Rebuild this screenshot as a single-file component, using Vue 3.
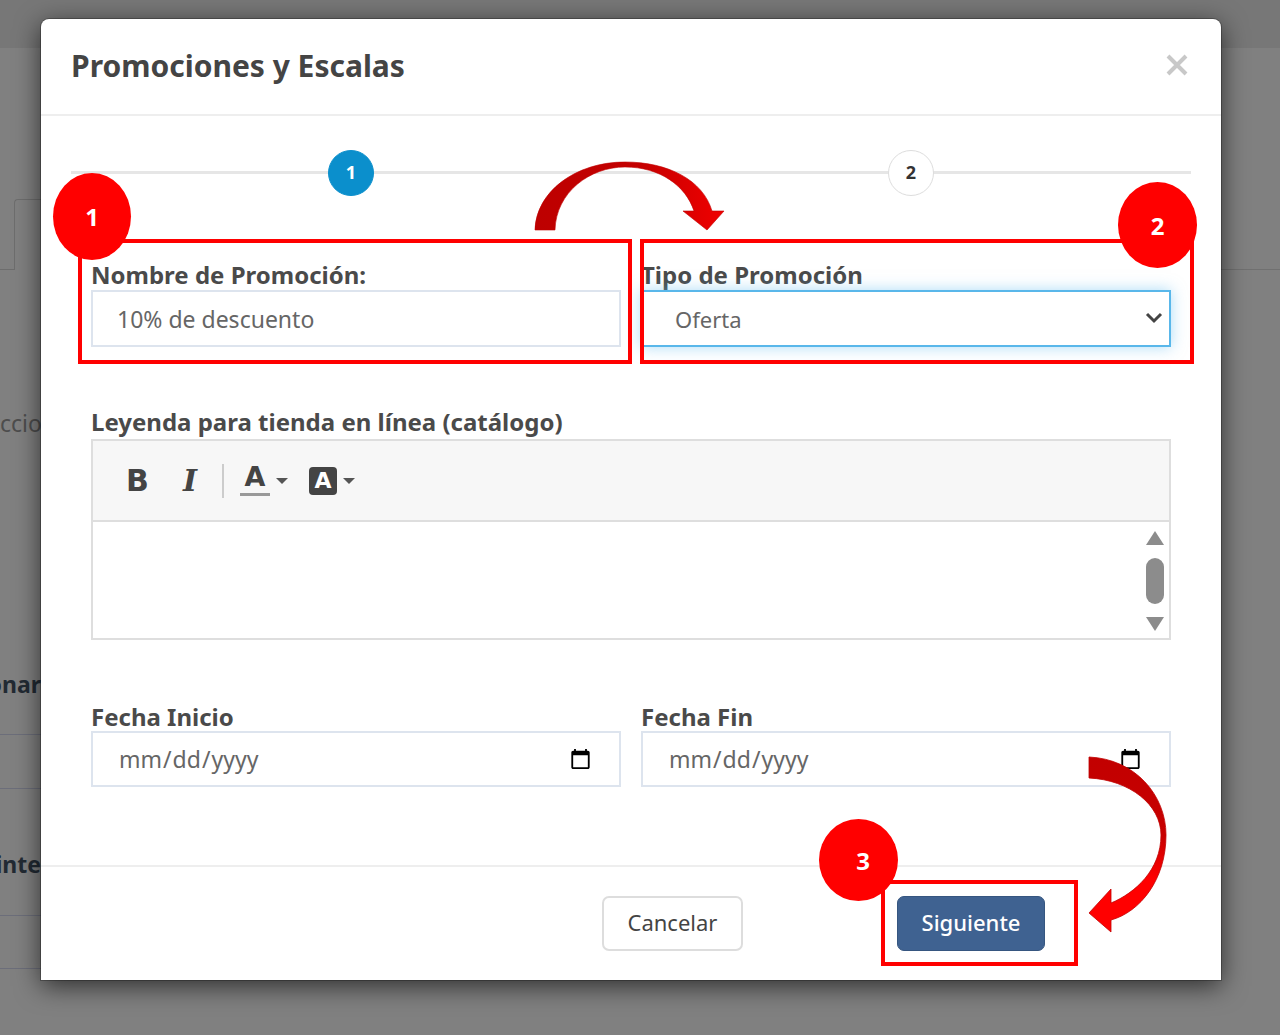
<script setup>
const scrollParts = ['up', 'thumb', 'down']
</script>

<template>
  <div class="page">
    <div class="top-band"></div>
    <div class="bg-tab"></div>
    <div class="bg-rule tab-base"></div>
    <div class="bg-rule bg-right"></div>
    <span class="bg-text t1">ccio</span>
    <span class="bg-text t2">onar</span>
    <span class="bg-text t3">inte</span>
    <div class="bg-rule l1"></div>
    <div class="bg-rule l2"></div>
    <div class="bg-rule l3"></div>
    <div class="bg-rule l4"></div>

    <section class="modal">
      <header class="modal-head">
        <h2>Promociones y Escalas</h2>
        <svg class="close" viewBox="0 0 22 22" width="22" height="22"><path d="M2 2 L20 20 M20 2 L2 20" /></svg>
      </header>

      <div class="modal-body">
        <div class="stepper">
          <span class="step active">1</span>
          <span class="step">2</span>
        </div>

        <div class="fields">
          <div class="form">
            <label class="first">Nombre de Promoción:</label>
            <input class="ctl" type="text" value="10% de descuento" />
          </div>
          <div class="form">
            <label class="first">Tipo de Promoción</label>
            <div class="select-wrap">
              <select class="ctl focused"><option>Oferta</option></select>
              <svg class="chev" viewBox="0 0 18 12" width="18" height="12"><path d="M2 2 L9 9 L16 2" /></svg>
            </div>
          </div>
        </div>

        <label class="legend">Leyenda para tienda en línea (catálogo)</label>
        <div class="editor">
          <div class="toolbar">
            <span class="tool-b">B</span>
            <span class="tool-i">I</span>
            <span class="tool-sep"></span>
            <span class="tool-a">A</span>
            <span class="caret"></span>
            <span class="tool-box">A</span>
            <span class="caret"></span>
          </div>
          <div class="editor-area">
            <div class="scroll">
              <span v-for="p in scrollParts" :key="p" :class="p"></span>
            </div>
          </div>
        </div>

        <div class="fields dates">
          <div class="form">
            <label>Fecha Inicio</label>
            <input class="ctl date" type="date" />
          </div>
          <div class="form">
            <label>Fecha Fin</label>
            <input class="ctl date" type="date" />
          </div>
        </div>
      </div>

      <footer class="modal-foot">
        <button class="btn cancel">Cancelar</button>
        <button class="btn next">Siguiente</button>
      </footer>
    </section>

    <!-- annotations drawn over the screenshot -->
    <div class="mark m1"></div>
    <div class="mark m2"></div>
    <div class="mark m3"></div>
    <span class="badge b1">1</span>
    <span class="badge b2">2</span>
    <span class="badge b3">3</span>
    <svg class="arrows" viewBox="0 0 1280 1035" width="1280" height="1035">
      <defs>
        <linearGradient id="g1" x1="0" y1="0" x2="1" y2="0">
          <stop offset="0" stop-color="#bd0000" />
          <stop offset="0.55" stop-color="#c40000" />
          <stop offset="1" stop-color="#f00000" />
        </linearGradient>
        <linearGradient id="g2" x1="0" y1="0" x2="0" y2="1">
          <stop offset="0" stop-color="#c20000" />
          <stop offset="0.45" stop-color="#c80000" />
          <stop offset="0.7" stop-color="#ff0000" />
          <stop offset="1" stop-color="#ff0000" />
        </linearGradient>
      </defs>
      <path fill="url(#g1)" stroke="#c00000" stroke-width="0.6"
        d="M535 230 C536 192 575 162 625 162 C668 162 703 180 712 211 L724 211 L707 230 L683 211 L694 211 C686 186 660 167 625 167 C590 167 556 192 555 230 Z" />
      <path fill="url(#g2)" stroke="#c00000" stroke-width="0.8"
        d="M1089 757 C1135 759 1166 795 1166 835 C1166 880 1140 912 1111 920 L1111 932 L1089 913 L1111 889 L1111 903 C1135 893 1161 870 1161 835 C1161 805 1130 780 1089 778 Z" />
    </svg>
  </div>
</template>

<style>
html, body { margin: 0; background: #808080; }
</style>

<style scoped>
.page {
  position: relative;
  height: 1035px;
  overflow: hidden;
  background: #808080;
  font-family: "Noto Sans", sans-serif;
  padding-top: 19px;
  box-sizing: border-box;
}
.top-band { position: absolute; left: 0; right: 0; top: 0; height: 48px; background: #777; }
.bg-tab { position: absolute; left: 14px; top: 199px; width: 60px; height: 70px; border: solid #6d6d6d; border-width: 1px 0 0 1px; border-radius: 4px 0 0 0; }
.bg-rule { position: absolute; left: 0; width: 41px; height: 1px; background: #6c6e7a; }
.tab-base { top: 269px; width: 14px; background: #6d6d6d; }
.bg-right { left: 1221px; width: 59px; top: 269px; background: #707070; }
.l1 { top: 734px; } .l2 { top: 788px; } .l3 { top: 915px; } .l4 { top: 968px; }
.bg-text { position: absolute; left: 0; width: 41px; overflow: hidden; white-space: nowrap; font-size: 23px; line-height: 30px; }
.t1 { top: 408px; color: #4d4d4d; }
.t2 { top: 669px; color: #222a33; font-weight: 700; direction: rtl; }
.t3 { top: 849px; color: #222a33; font-weight: 700; direction: rtl; }

.modal {
  position: relative;
  width: 1180px;
  height: 961px;
  margin-left: 41px;
  background: #fff;
  border-radius: 8px 8px 0 0;
  box-shadow: 0 0 0 1px rgba(0, 0, 0, .25), 0 6px 26px rgba(0, 0, 0, .65);
  display: flex;
  flex-direction: column;
}
.modal-head {
  height: 95px;
  flex: none;
  border-bottom: 2px solid #eee;
  display: flex;
  align-items: center;
  justify-content: space-between;
  padding: 0 33px 0 30px;
}
.modal-head h2 { margin: 0 0 2px; font-size: 30px; font-weight: 700; color: #444; }
.close { margin-top: -3px; }
.close path { stroke: #c8c8c8; stroke-width: 4; fill: none; }

.modal-body { flex: 1; padding: 34px 50px 0; }
.stepper {
  position: relative;
  margin: 0 -20px;
  height: 45px;
  display: flex;
  align-items: center;
  justify-content: space-around;
  background: linear-gradient(#e6e6e6, #e6e6e6) center / 100% 3px no-repeat;
}
.step {
  width: 44px;
  height: 42px;
  padding-bottom: 2px;
  border: 1px solid #ddd;
  border-radius: 50%;
  background: #fff;
  display: flex;
  align-items: center;
  justify-content: center;
  font-size: 18px;
  font-weight: 700;
  color: #333;
  box-sizing: content-box;
}
.step.active { background: #0b8fcc; border-color: #0b8fcc; color: #fff; }

.fields { display: grid; grid-template-columns: 1fr 1fr; gap: 20px; margin-top: 65px; }
.dates { margin-top: 61px; }
label { display: block; height: 30px; line-height: 30px; font-size: 24px; font-weight: 700; color: #4a4a4a; white-space: nowrap; }
.dates label { line-height: 31px; }
.legend { margin-top: 62px; line-height: 26px; }
.ctl {
  display: block;
  width: 100%;
  height: 57px;
  box-sizing: border-box;
  border: 2px solid #dde4ee;
  background: #fff;
  padding: 0 24px;
  font: 23px "Noto Sans", sans-serif;
  color: #666;
  outline: none;
  border-radius: 0;
  appearance: none;
}
.date { height: 56px; padding: 0 25px 0 25px; }
.select-wrap { position: relative; }
.focused { border-color: #59b7ea; box-shadow: 0 0 14px rgba(90, 185, 240, .5); padding-left: 32px; font-size: 22px; }
.chev { position: absolute; right: 8px; top: 22px; }
.chev path { fill: none; stroke: #444; stroke-width: 3; }

.editor { height: 201px; box-sizing: border-box; border: 2px solid #dedede; display: flex; flex-direction: column; }
.toolbar {
  height: 81px;
  flex: none;
  box-sizing: border-box;
  background: #f7f7f7;
  border-bottom: 2px solid #dedede;
  display: flex;
  align-items: center;
  padding-left: 33px;
  color: #444;
}
.tool-b { font: 700 30px "DejaVu Sans", sans-serif; width: 30px; }
.tool-i { font: italic 700 30px "DejaVu Serif", serif; margin-left: 27px; width: 24px; }
.tool-sep { width: 2px; height: 34px; background: #ccc; margin-left: 15px; }
.tool-a { font: 700 27px "DejaVu Sans", sans-serif; margin-left: 16px; border-bottom: 3px solid #999; width: 30px; height: 30px; line-height: 28px; text-align: center; margin-top: -2px; }
.tool-box { font: 700 22px "DejaVu Sans", sans-serif; width: 28px; height: 28px; line-height: 28px; margin-left: 21px; background: #444; color: #fff; border-radius: 4px; text-align: center; }
.caret { width: 0; height: 0; border: 6px solid transparent; border-top-color: #555; border-bottom: 0; margin-left: 6px; }
.editor-area { flex: 1; display: flex; justify-content: flex-end; }
.scroll { width: 18px; margin-right: 5px; display: flex; flex-direction: column; align-items: center; justify-content: space-between; padding: 9px 0 7px; }
.scroll .up { width: 0; height: 0; border-left: 9px solid transparent; border-right: 9px solid transparent; border-bottom: 14px solid #8c8c8c; }
.scroll .thumb { width: 18px; height: 46px; border-radius: 9px; background: #8c8c8c; }
.scroll .down { width: 0; height: 0; border-left: 9px solid transparent; border-right: 9px solid transparent; border-top: 14px solid #8c8c8c; }

.modal-foot {
  height: 115px;
  flex: none;
  box-sizing: border-box;
  border-top: 2px solid #eee;
  display: flex;
  align-items: flex-start;
  padding: 29px 0 0 561px;
  gap: 154px;
}
.btn { height: 55px; padding: 0 0 3px; border-radius: 7px; font: 22px "Noto Sans", sans-serif; box-sizing: border-box; }
.cancel { width: 141px; background: #fff; border: 2px solid #ddd; color: #444; }
.next { width: 148px; background: #3f6291; border: 1px solid #365680; color: #fff; font-weight: 500; }

.mark { position: absolute; border: 4px solid #f00; box-sizing: border-box; }
.m1 { left: 78px; top: 239px; width: 554px; height: 125px; }
.m2 { left: 640px; top: 239px; width: 554px; height: 125px; }
.m3 { left: 881px; top: 880px; width: 197px; height: 86px; }
.badge { position: absolute; background: #f00; color: #fff; border-radius: 50%; font: 700 24px "Open Sans", sans-serif; display: flex; align-items: center; justify-content: center; }
.b1 { left: 53px; top: 173px; width: 78px; height: 87px; }
.b2 { left: 1118px; top: 182px; width: 79px; height: 86px; }
.b3 { left: 819px; top: 819px; width: 79px; height: 82px; padding-left: 9px; box-sizing: border-box; }
.arrows { position: absolute; left: 0; top: 0; pointer-events: none; }
</style>
